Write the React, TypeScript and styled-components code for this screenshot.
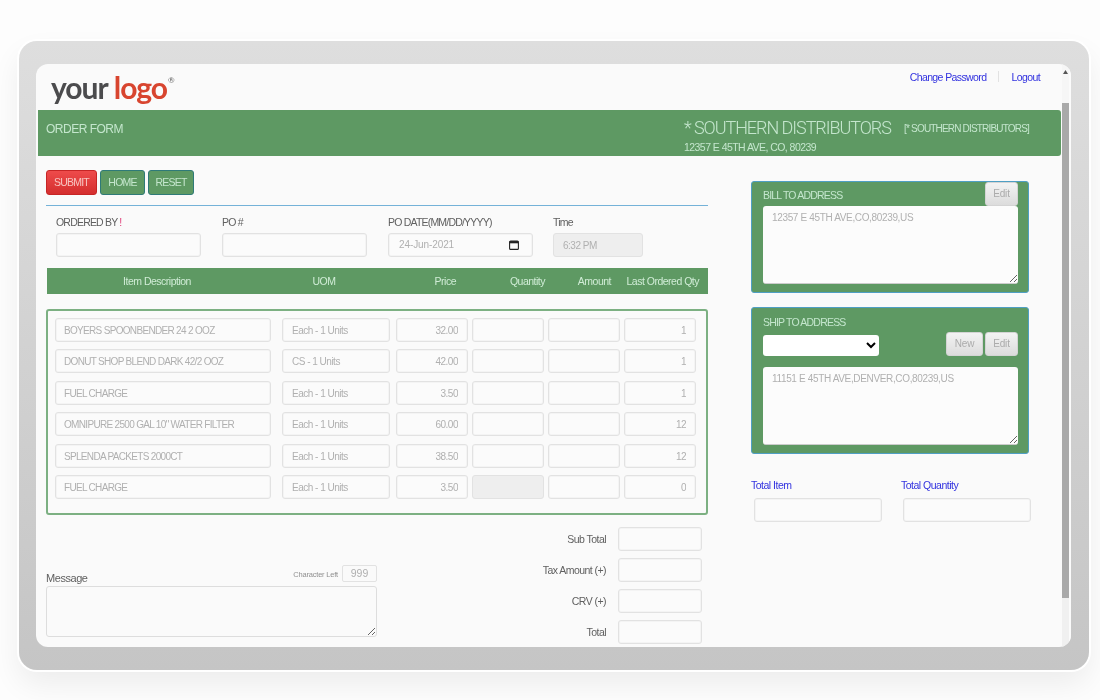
import React from 'react';
import styled, { createGlobalStyle } from 'styled-components';

const GlobalStyle = createGlobalStyle`
  html, body {
    margin: 0;
    padding: 0;
    background: #fdfdfd;
  }
  #root {
    width: 1100px;
    height: 700px;
    overflow: hidden;
  }
  * {
    box-sizing: border-box;
  }
`;

const GREEN = '#5e9963';
const FONT = '"Liberation Sans", Arial, sans-serif';

const Frame = styled.div`
  width: 1070px;
  height: 629px;
  margin: 41px 0 0 19px;
  padding: 23px 18px 23px 17px;
  border-radius: 18px;
  background: linear-gradient(180deg, #dedede 0%, #c5c5c5 100%);
  box-shadow: 0 0 0 2px #ffffff, 0 14px 30px rgba(0, 0, 0, 0.07);
`;

const Screen = styled.div`
  display: flex;
  height: 583px;
  border-radius: 12px;
  overflow: hidden;
  background: #fafafa;
  font-family: ${FONT};
  filter: blur(0.35px);
`;

const Page = styled.div`
  width: 1026px;
  flex: none;
  overflow: hidden;
`;

const Scrollbar = styled.div`
  width: 9px;
  flex: none;
  display: flex;
  flex-direction: column;
  background: #f0f0f0;
  border-right: 2px solid #fbfbfb;
`;

const ScrollTop = styled.div`
  height: 39px;
  padding-top: 6px;
  display: flex;
  justify-content: center;
  align-items: flex-start;
  background: #f6f6f6;
`;

const ScrollThumb = styled.div`
  height: 495px;
  background: #a9a9a9;
`;

const TopBar = styled.header`
  height: 46px;
  display: flex;
  justify-content: space-between;
`;

const Logo = styled.div`
  margin: 4px 0 0 15px;
  font-family: Lato, "Open Sans", sans-serif;
  font-size: 30px;
  font-weight: 700;
  line-height: 38px;
  letter-spacing: -1px;
  color: #4b4b4d;
  display: flex;
  align-items: flex-start;
`;

const LogoRed = styled.span`
  margin-left: 6px;
  color: #d8452f;
`;

const LogoMark = styled.span`
  margin: 2px 0 0 1px;
  font-size: 8px;
  line-height: 20px;
  letter-spacing: 0;
  font-weight: 400;
  color: #666666;
`;

const Links = styled.nav`
  margin: 6px 22px 0 0;
  display: flex;
  align-items: center;
  height: 13px;
  font-size: 10.5px;
  letter-spacing: -0.6px;
`;

const TopLink = styled.a`
  color: #3232df;
`;

const LinkDivider = styled.span`
  width: 1px;
  height: 11px;
  margin: 0 12px;
  background: #e2e2e2;
`;

const Banner = styled.div`
  height: 45.6px;
  margin: 0 1px 0 2px;
  padding: 0 32px 0 8px;
  display: flex;
  justify-content: space-between;
  background: ${GREEN};
  border-radius: 0 3px 3px 0;
  color: #c4e6cd;
`;

const BannerTitle = styled.div`
  padding-top: 12px;
  font-size: 12px;
  letter-spacing: -0.5px;
`;

const BannerCompany = styled.div`
  width: 345px;
  padding-top: 7px;
`;

const CompanyLine = styled.div`
  display: flex;
  align-items: center;
  justify-content: space-between;
  height: 20px;
  white-space: nowrap;
`;

const CompanyName = styled.span`
  font-family: Roboto, ${FONT};
  font-size: 18px;
  font-weight: 300;
  letter-spacing: -1.05px;
`;

const CompanyCode = styled.span`
  margin-top: 3px;
  font-size: 10px;
  letter-spacing: -0.82px;
`;

const CompanyAddress = styled.div`
  margin-top: 4px;
  font-size: 10.5px;
  letter-spacing: -0.55px;
`;

const Main = styled.main`
  display: flex;
  padding-left: 10px;
`;

const LeftColumn = styled.section`
  width: 662px;
  flex: none;
  padding-top: 14.4px;
`;

const RightColumn = styled.aside`
  width: 280px;
  flex: none;
  margin-left: 43px;
  padding-top: 25.4px;
`;

const ButtonRow = styled.div`
  display: flex;
  gap: 3px;
  height: 25px;
`;

const ActionButton = styled.button<{ $width: number; $red?: boolean }>`
  width: ${(p) => p.$width}px;
  height: 25px;
  padding: 0;
  border-radius: 3px;
  border: 1px solid ${(p) => (p.$red ? '#c62525' : '#2f7a78')};
  background: ${(p) => (p.$red ? 'linear-gradient(180deg, #ee4b4b, #d42e2e)' : GREEN)};
  color: ${(p) => (p.$red ? '#f7c4c0' : '#c4e6cd')};
  font-family: ${FONT};
  font-size: 10.5px;
  letter-spacing: -0.8px;
`;

const Rule = styled.div`
  height: 1px;
  margin-top: 10px;
  background: #74b2d8;
`;

const FieldRow = styled.div`
  display: flex;
  padding-left: 10px;
  margin-top: 9px;
`;

const Field = styled.div<{ $width: number; $gap?: number }>`
  width: ${(p) => p.$width}px;
  margin-right: ${(p) => p.$gap ?? 0}px;
`;

const FieldLabel = styled.label`
  display: block;
  height: 18px;
  font-size: 10.5px;
  line-height: 14px;
  letter-spacing: -0.8px;
  color: #606060;
`;

const Required = styled.span`
  color: #e0407a;
`;

const TextBox = styled.input<{ $right?: boolean; $caps?: boolean }>`
  display: block;
  width: 100%;
  height: 24px;
  padding: 1px 9px 0 ${(p) => (p.$caps ? 8 : 9)}px;
  border: 1px solid #e2e2e2;
  border-radius: 3px;
  background: #fbfbfb;
  box-shadow: inset 0 0 0 1px #f4f4f4;
  color: #b0b0b0;
  font-family: ${FONT};
  font-size: 10px;
  letter-spacing: ${(p) => (p.$caps ? -0.68 : -0.5)}px;
  text-align: ${(p) => (p.$right ? 'right' : 'left')};
  outline: none;

  &:disabled {
    background: #eeeeee;
    box-shadow: none;
  }
`;

const DateBox = styled.div`
  height: 24px;
  padding: 0 13px 0 10px;
  display: flex;
  align-items: center;
  justify-content: space-between;
  border: 1px solid #e2e2e2;
  border-radius: 3px;
  background: #fbfbfb;
  box-shadow: inset 0 0 0 1px #f4f4f4;
  color: #b0b0b0;
  font-size: 10px;
  letter-spacing: -0.1px;
`;

const TableHead = styled.div`
  display: flex;
  align-items: center;
  height: 26px;
  margin: 11px 0 0 1px;
  background: ${GREEN};
  color: #d0ecd6;
  font-size: 10.5px;
  letter-spacing: -0.5px;
`;

const HeadCell = styled.div<{ $width: number; $right?: boolean }>`
  width: ${(p) => p.$width}px;
  flex: none;
  text-align: ${(p) => (p.$right ? 'right' : 'center')};
`;

const ItemsBox = styled.div`
  margin-top: 15px;
  height: 206px;
  padding: 7px 0 0 7px;
  display: flex;
  flex-direction: column;
  gap: 7.4px;
  border: 2px solid #7cb082;
  border-radius: 3px;
`;

const ItemRow = styled.div`
  display: flex;
  gap: 4px;
`;

const ItemCell = styled.div<{ $width: number; $offset?: number }>`
  width: ${(p) => p.$width}px;
  flex: none;
  margin-left: ${(p) => p.$offset ?? 0}px;
`;

const Bottom = styled.div`
  display: flex;
  justify-content: space-between;
  margin-top: 12px;
`;

const MessageBlock = styled.div`
  width: 331px;
  padding-top: 38px;
`;

const MessageHead = styled.div`
  display: flex;
  align-items: flex-end;
  justify-content: space-between;
  height: 17px;
`;

const MessageLabel = styled.span`
  font-size: 11px;
  line-height: 8px;
  letter-spacing: -0.45px;
  color: #606060;
`;

const CharCount = styled.div`
  display: flex;
  align-items: center;
  gap: 4px;
  font-size: 7.5px;
  letter-spacing: -0.2px;
  color: #909090;
`;

const CharLabel = styled.span`
  margin-top: 3px;
`;

const CountBox = styled.div`
  width: 35px;
  height: 17px;
  border: 1px solid #e2e2e2;
  border-radius: 2px;
  text-align: center;
  font-size: 10.5px;
  line-height: 14px;
  letter-spacing: 0;
  color: #b0b0b0;
`;

const MessageArea = styled.textarea`
  display: block;
  width: 331px;
  height: 51px;
  margin-top: 4px;
  border: 1px solid #dddddd;
  border-radius: 3px;
  background: #fafafa;
  outline: none;
`;

const Totals = styled.div`
  display: flex;
  flex-direction: column;
  gap: 7px;
  padding-right: 6px;
`;

const TotalRow = styled.div`
  display: flex;
  align-items: center;
  justify-content: flex-end;
  gap: 12px;
`;

const TotalLabel = styled.span`
  font-size: 10.5px;
  letter-spacing: -0.55px;
  color: #606060;
`;

const TotalBox = styled.div`
  width: 84px;
`;

const AddressCard = styled.div`
  width: 278px;
  padding: 0 10px 8px 11px;
  border: 1px solid #4f9fc4;
  border-radius: 3px;
  background: ${GREEN};
  & + & {
    margin-top: 14px;
  }
`;

const CardHead = styled.div`
  display: flex;
  justify-content: space-between;
  height: 24px;
`;

const CardTitle = styled.div<{ $top: number }>`
  height: 24px;
  padding-top: ${(p) => p.$top}px;
  font-size: 10.5px;
  line-height: 14px;
  letter-spacing: -0.8px;
  color: #c4e6cd;
`;

const CardControls = styled.div`
  display: flex;
  align-items: flex-end;
  justify-content: space-between;
  height: 24px;
  margin-bottom: 11px;
`;

const AddressSelect = styled.select`
  width: 116px;
  height: 21px;
  border: 0;
  border-radius: 3px;
  background: #ffffff;
  outline: none;
`;

const CardButtons = styled.div`
  display: flex;
  gap: 2px;
`;

const GreyButton = styled.button<{ $width: number }>`
  width: ${(p) => p.$width}px;
  height: 24px;
  padding: 0;
  border: 1px solid #d4d4d4;
  border-radius: 3px;
  background: linear-gradient(180deg, #f3f3f3, #dcdcdc);
  color: #ababab;
  font-family: ${FONT};
  font-size: 10px;
  letter-spacing: -0.2px;
`;

const AddressArea = styled.textarea`
  display: block;
  width: 255px;
  height: 78px;
  padding: 6px 9px;
  border: 0;
  border-bottom: 1px solid #cccccc;
  border-radius: 3px;
  background: #fcfcfc;
  color: #b0b0b0;
  font-family: ${FONT};
  font-size: 10px;
  letter-spacing: -0.35px;
  outline: none;
`;

const Counters = styled.div`
  display: grid;
  grid-template-columns: 150px 130px;
  margin-top: 24px;
`;

const CounterLabel = styled.div`
  height: 20px;
  font-size: 10.5px;
  line-height: 14px;
  letter-spacing: -0.5px;
  color: #3232df;
`;

const CounterBox = styled.div<{ $indent: number }>`
  width: 128px;
  margin-left: ${(p) => p.$indent}px;
`;

const items = [
  { name: 'BOYERS SPOONBENDER 24 2 OOZ', uom: 'Each - 1 Units', price: '32.00', last: '1' },
  { name: 'DONUT SHOP BLEND DARK 42/2 OOZ', uom: 'CS - 1 Units', price: '42.00', last: '1' },
  { name: 'FUEL CHARGE', uom: 'Each - 1 Units', price: '3.50', last: '1' },
  { name: 'OMNIPURE 2500 GAL 10" WATER FILTER', uom: 'Each - 1 Units', price: '60.00', last: '12' },
  { name: 'SPLENDA PACKETS 2000CT', uom: 'Each - 1 Units', price: '38.50', last: '12' },
  { name: 'FUEL CHARGE', uom: 'Each - 1 Units', price: '3.50', last: '0', locked: true },
];

const CalendarIcon = () => (
  <svg width="10" height="10" viewBox="0 0 10 10" fill="none">
    <rect x="0.6" y="1.1" width="8.8" height="8.3" rx="1" stroke="#222222" strokeWidth="1.1" />
    <rect x="0.6" y="1.1" width="8.8" height="2.2" fill="#222222" />
  </svg>
);

const ArrowUp = () => (
  <svg width="5" height="4" viewBox="0 0 5 4">
    <path d="M2.5 0 L5 4 L0 4 Z" fill="#555555" />
  </svg>
);

const OrderItem = ({ item }: { item: (typeof items)[number] }) => (
  <ItemRow>
    <ItemCell $width={216}>
      <TextBox readOnly $caps defaultValue={item.name} />
    </ItemCell>
    <ItemCell $width={108} $offset={7}>
      <TextBox readOnly defaultValue={item.uom} />
    </ItemCell>
    <ItemCell $width={72} $offset={2}>
      <TextBox readOnly $right defaultValue={item.price} />
    </ItemCell>
    <ItemCell $width={72}>
      <TextBox disabled={item.locked} />
    </ItemCell>
    <ItemCell $width={72}>
      <TextBox />
    </ItemCell>
    <ItemCell $width={72}>
      <TextBox readOnly $right defaultValue={item.last} />
    </ItemCell>
  </ItemRow>
);

export default function App() {
  return (
    <>
      <GlobalStyle />
      <Frame>
        <Screen>
          <Page>
            <TopBar>
              <Logo>
                your<LogoRed>logo</LogoRed>
                <LogoMark>®</LogoMark>
              </Logo>
              <Links>
                <TopLink>Change Password</TopLink>
                <LinkDivider />
                <TopLink>Logout</TopLink>
              </Links>
            </TopBar>
            <Banner>
              <BannerTitle>ORDER FORM</BannerTitle>
              <BannerCompany>
                <CompanyLine>
                  <CompanyName>* SOUTHERN DISTRIBUTORS</CompanyName>
                  <CompanyCode>[* SOUTHERN DISTRIBUTORS]</CompanyCode>
                </CompanyLine>
                <CompanyAddress>12357 E 45TH AVE, CO, 80239</CompanyAddress>
              </BannerCompany>
            </Banner>
            <Main>
              <LeftColumn>
                <ButtonRow>
                  <ActionButton $red $width={51}>SUBMIT</ActionButton>
                  <ActionButton $width={45}>HOME</ActionButton>
                  <ActionButton $width={46}>RESET</ActionButton>
                </ButtonRow>
                <Rule />
                <FieldRow>
                  <Field $width={145} $gap={21}>
                    <FieldLabel>ORDERED BY <Required>!</Required></FieldLabel>
                    <TextBox />
                  </Field>
                  <Field $width={145} $gap={21}>
                    <FieldLabel>PO #</FieldLabel>
                    <TextBox />
                  </Field>
                  <Field $width={145} $gap={20}>
                    <FieldLabel>PO DATE(MM/DD/YYYY)</FieldLabel>
                    <DateBox>
                      24-Jun-2021
                      <CalendarIcon />
                    </DateBox>
                  </Field>
                  <Field $width={90}>
                    <FieldLabel>Time</FieldLabel>
                    <TextBox disabled defaultValue="6:32 PM" />
                  </Field>
                </FieldRow>
                <TableHead>
                  <HeadCell $width={220}>Item Description</HeadCell>
                  <HeadCell $width={114}>UOM</HeadCell>
                  <HeadCell $right $width={75}>Price</HeadCell>
                  <HeadCell $right $width={89}>Quantity</HeadCell>
                  <HeadCell $right $width={66}>Amount</HeadCell>
                  <HeadCell $right $width={88}>Last Ordered Qty</HeadCell>
                </TableHead>
                <ItemsBox>
                  {items.map((item, i) => (
                    <OrderItem key={i} item={item} />
                  ))}
                </ItemsBox>
                <Bottom>
                  <MessageBlock>
                    <MessageHead>
                      <MessageLabel>Message</MessageLabel>
                      <CharCount>
                        <CharLabel>Character Left</CharLabel>
                        <CountBox>999</CountBox>
                      </CharCount>
                    </MessageHead>
                    <MessageArea />
                  </MessageBlock>
                  <Totals>
                    <TotalRow>
                      <TotalLabel>Sub Total</TotalLabel>
                      <TotalBox><TextBox /></TotalBox>
                    </TotalRow>
                    <TotalRow>
                      <TotalLabel>Tax Amount (+)</TotalLabel>
                      <TotalBox><TextBox /></TotalBox>
                    </TotalRow>
                    <TotalRow>
                      <TotalLabel>CRV (+)</TotalLabel>
                      <TotalBox><TextBox /></TotalBox>
                    </TotalRow>
                    <TotalRow>
                      <TotalLabel>Total</TotalLabel>
                      <TotalBox><TextBox /></TotalBox>
                    </TotalRow>
                  </Totals>
                </Bottom>
              </LeftColumn>
              <RightColumn>
                <AddressCard>
                  <CardHead>
                    <CardTitle $top={6}>BILL TO ADDRESS</CardTitle>
                    <GreyButton $width={33}>Edit</GreyButton>
                  </CardHead>
                  <AddressArea readOnly defaultValue="12357 E 45TH AVE,CO,80239,US" />
                </AddressCard>
                <AddressCard>
                  <CardTitle $top={7}>SHIP TO ADDRESS</CardTitle>
                  <CardControls>
                    <AddressSelect>
                      <option></option>
                    </AddressSelect>
                    <CardButtons>
                      <GreyButton $width={37}>New</GreyButton>
                      <GreyButton $width={33}>Edit</GreyButton>
                    </CardButtons>
                  </CardControls>
                  <AddressArea readOnly defaultValue="11151 E 45TH AVE,DENVER,CO,80239,US" />
                </AddressCard>
                <Counters>
                  <div>
                    <CounterLabel>Total Item</CounterLabel>
                    <CounterBox $indent={3}><TextBox /></CounterBox>
                  </div>
                  <div>
                    <CounterLabel>Total Quantity</CounterLabel>
                    <CounterBox $indent={2}><TextBox /></CounterBox>
                  </div>
                </Counters>
              </RightColumn>
            </Main>
          </Page>
          <Scrollbar>
            <ScrollTop>
              <ArrowUp />
            </ScrollTop>
            <ScrollThumb />
          </Scrollbar>
        </Screen>
      </Frame>
    </>
  );
}
